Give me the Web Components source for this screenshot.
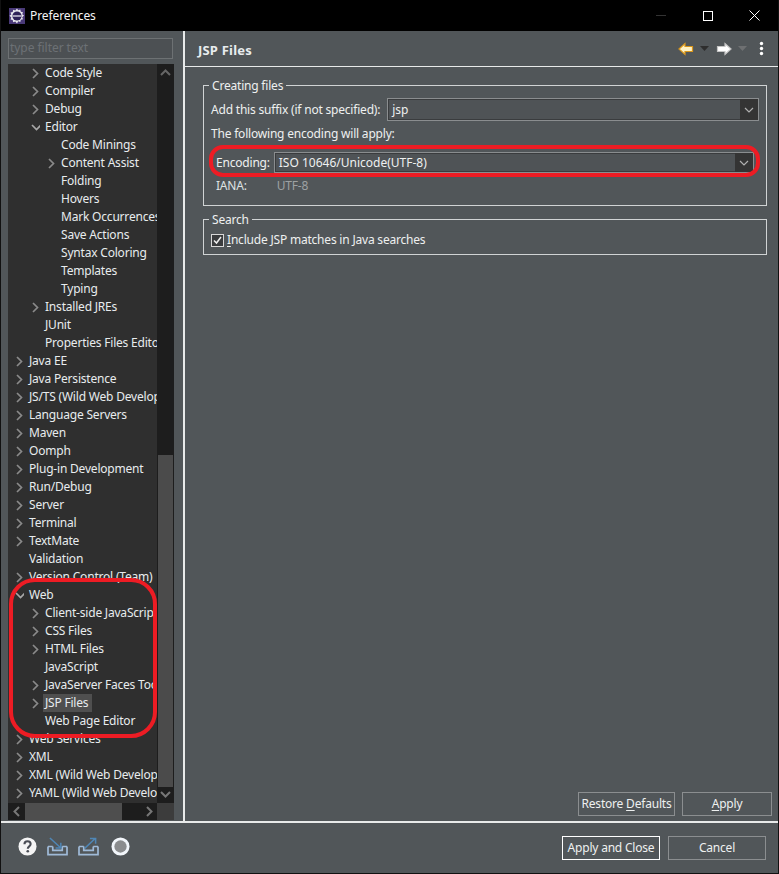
<!DOCTYPE html>
<html lang="en"><head><meta charset="utf-8"><title>Preferences</title>
<style>
html,body{margin:0;height:100%;background:#515659;overflow:hidden}
body{font:12px/18px "Noto Sans","Liberation Sans",sans-serif;letter-spacing:-.2px;color:#eef0f0}
</style></head><body>
<pref-window>
  <pref-titlebar slot="title">Preferences</pref-titlebar>
  <pref-sidebar slot="side">
    <pref-tree>
      <tree-row level="2" arrow="right">Code Style</tree-row>
      <tree-row level="2" arrow="right">Compiler</tree-row>
      <tree-row level="2" arrow="right">Debug</tree-row>
      <tree-row level="2" arrow="down">Editor</tree-row>
      <tree-row level="3">Code Minings</tree-row>
      <tree-row level="3" arrow="right">Content Assist</tree-row>
      <tree-row level="3">Folding</tree-row>
      <tree-row level="3">Hovers</tree-row>
      <tree-row level="3">Mark Occurrences</tree-row>
      <tree-row level="3">Save Actions</tree-row>
      <tree-row level="3">Syntax Coloring</tree-row>
      <tree-row level="3">Templates</tree-row>
      <tree-row level="3">Typing</tree-row>
      <tree-row level="2" arrow="right">Installed JREs</tree-row>
      <tree-row level="2">JUnit</tree-row>
      <tree-row level="2">Properties Files Editor</tree-row>
      <tree-row level="1" arrow="right">Java EE</tree-row>
      <tree-row level="1" arrow="right">Java Persistence</tree-row>
      <tree-row level="1" arrow="right">JS/TS (Wild Web Developer)</tree-row>
      <tree-row level="1" arrow="right">Language Servers</tree-row>
      <tree-row level="1" arrow="right">Maven</tree-row>
      <tree-row level="1" arrow="right">Oomph</tree-row>
      <tree-row level="1" arrow="right">Plug-in Development</tree-row>
      <tree-row level="1" arrow="right">Run/Debug</tree-row>
      <tree-row level="1" arrow="right">Server</tree-row>
      <tree-row level="1" arrow="right">Terminal</tree-row>
      <tree-row level="1" arrow="right">TextMate</tree-row>
      <tree-row level="1">Validation</tree-row>
      <tree-row level="1" arrow="right">Version Control (Team)</tree-row>
      <tree-row level="1" arrow="down">Web</tree-row>
      <tree-row level="2" arrow="right">Client-side JavaScript</tree-row>
      <tree-row level="2" arrow="right">CSS Files</tree-row>
      <tree-row level="2" arrow="right">HTML Files</tree-row>
      <tree-row level="2">JavaScript</tree-row>
      <tree-row level="2" arrow="right">JavaServer Faces Tools</tree-row>
      <tree-row level="2" arrow="right" selected>JSP Files</tree-row>
      <tree-row level="2">Web Page Editor</tree-row>
      <tree-row level="1" arrow="right">Web Services</tree-row>
      <tree-row level="1" arrow="right">XML</tree-row>
      <tree-row level="1" arrow="right">XML (Wild Web Developer)</tree-row>
      <tree-row level="1" arrow="right">YAML (Wild Web Developer)</tree-row>
    </pref-tree>
  </pref-sidebar>
  <pref-page slot="main" heading="JSP Files"></pref-page>
  <pref-footer slot="foot"></pref-footer>
</pref-window>
<script>
function def(name, css, html, init){
  customElements.define(name, class extends HTMLElement{
    constructor(){super();this.attachShadow({mode:'open'}).innerHTML='<style>'+css+'</style>'+(typeof html==='function'?html(this):html);}
    connectedCallback(){ if(init) init(this); }
  });
}
def('pref-window',`
:host{display:grid;grid-template-columns:184px 1fr;grid-template-rows:31px 1fr 52px;height:874px;box-sizing:border-box;border:solid #111;border-width:0 1px 1px 1px}
.t{grid-column:1/3;display:block}
.f{grid-column:1/3;display:block;border-top:2px solid #e8eaea;box-sizing:border-box}
.s{display:block;min-height:0;border-right:2px solid #e8eaea;box-sizing:content-box}
.m{display:block;min-height:0}
`,`<div class="t"><slot name="title"></slot></div><div class="s"><slot name="side"></slot></div><div class="m"><slot name="main"></slot></div><div class="f"><slot name="foot"></slot></div>`);

def('pref-titlebar',`
:host{display:flex;align-items:center;height:31px;background:#000;color:#f4f4f4;padding-left:8px;box-sizing:border-box;letter-spacing:-.1px}
svg{display:block}
.ic{margin-right:5px}
.g{flex:1;font-size:12px}
.b{width:46px;height:31px;display:flex;align-items:center;justify-content:center}
`,`<svg class="ic" width="16" height="16" viewBox="0 0 16 16"><rect width="16" height="16" fill="#4a3a78"/><path d="M8 .5l1.200 1.800 2.100-.8.500 2.200 2.200.5-.8 2.100 1.800 1.200-1.800 1.700.8 2.100-2.200.5-.5 2.200-2.100-.8L8 15.500l-1.700-2-2.100.8-.5-2.200-2.200-.5.8-2.100-1.800-1.700 1.800-1.200-.8-2.100 2.200-.5.500-2.200 2.100.8z" fill="#e9e9ee"/><circle cx="8" cy="8" r="4.600" fill="#2e2358"/><path d="M3.600 7.300h8.800v1.400H3.600z" fill="#d8d6e4"/></svg>
<div class="g"><slot></slot></div>
<div class="b" style="margin-right:1px"><svg width="10" height="2"><rect y="0" width="10" height="1" fill="#333"/></svg></div>
<div class="b"><svg width="10" height="10"><rect x=".5" y=".5" width="9" height="9" fill="none" stroke="#fff"/></svg></div>
<div class="b" style="width:47px"><svg width="11" height="11" viewBox="0 0 11 11"><path d="M.5.5l10 10M10.500.5l-10 10" stroke="#fff" fill="none"/></svg></div>`);

def('pref-sidebar',`
:host{display:flex;flex-direction:column;height:100%;box-sizing:border-box;padding:7px 10px 0 7px;gap:5px}
.filter{height:21px;box-sizing:border-box;border:1px solid #6d7173;background:#4c5053;color:#6c7175;padding:0 1px;line-height:17px;font-size:12px;letter-spacing:-.05px;flex:none}
`,`<div class="filter">type filter text</div><slot></slot>`);

def('pref-tree',`
:host{display:grid;grid-template-columns:149px 17px;grid-template-rows:739px 17px;flex:none;background:#2f2f2f}
.rows{overflow:hidden;min-width:0}
.v{background:#1d1d1d;display:flex;flex-direction:column;align-items:center;position:relative}
.v .thumb{width:15px;background:#4b4b4b;margin-top:auto;height:332px;margin-bottom:16px}
.h{background:#1d1d1d;display:flex;align-items:center;padding:0 0 0 5px;box-sizing:border-box}
.h .thumb{width:97px;height:17px;background:#4e4e4e;margin-left:5px}
.h svg:last-child{margin-left:auto;margin-right:4px}
.corner{background:#3c3c3c}
.up,.dn{position:absolute;left:3px}
.up{top:5px}.dn{bottom:5px}
`,`<div class="rows"><slot></slot></div>
<div class="v"><svg class="up" width="11" height="7"><path d="M1 6l4.500-4.500L10 6" fill="none" stroke="#666" stroke-width="2"/></svg><div class="thumb"></div><svg class="dn" width="11" height="7"><path d="M1 1l4.500 4.500L10 1" fill="none" stroke="#777" stroke-width="2"/></svg></div>
<div class="h"><svg width="7" height="11"><path d="M6 1L1.500 5.500 6 10" fill="none" stroke="#777" stroke-width="2"/></svg><div class="thumb"></div><svg width="7" height="11"><path d="M1 1l4.500 4.500L1 10" fill="none" stroke="#777" stroke-width="2"/></svg></div>
<div class="corner"></div>`);

def('tree-row',`
:host{display:flex;align-items:center;height:18px;white-space:nowrap;color:#e8ecee;font-size:12px}
.a{width:9px;height:18px;flex:none;display:flex;align-items:center;justify-content:center;margin-right:3px}
.l{padding:0 2px;height:18px;line-height:18px}
:host([selected]) .l{background:#4f4f4f;padding-right:4px}
`,(el)=>{
  const lv=+el.getAttribute('level')||1, a=el.getAttribute('arrow');
  const pad=7+(lv-1)*16;
  let ic='';
  if(a==='right') ic='<svg width="7" height="11"><path d="M1 1l4.500 4.500L1 10" fill="none" stroke="#8a8a8a" stroke-width="1.700"/></svg>';
  if(a==='down') ic='<svg width="11" height="7"><path d="M1 1l4.500 4.500L10 1" fill="none" stroke="#a8a8a8" stroke-width="1.700"/></svg>';
  return `<div style="width:${pad}px;flex:none"></div><div class="a">${ic}</div><div class="l"><slot></slot></div>`;
});

def('pref-combo',`
:host{display:flex;height:23px;flex:1;box-sizing:border-box;border:1px solid #8a8d8f;background:#4f5356;min-width:0;letter-spacing:0}
.v{flex:1;padding-left:3px;line-height:19px;color:#eef0f0;border:solid #3a3c3e;border-width:1px 0 1px 1px}
.b{width:18px;background:#343434;display:flex;align-items:center;justify-content:center}
`,`<div class="v"><slot></slot></div><div class="b"><svg width="10" height="6"><path d="M1 1l4 4 4-4" fill="none" stroke="#b0b0b0" stroke-width="1.200"/></svg></div>`);

def('pref-group',`
:host{display:block;position:relative;border:1px solid #d0d3d4;box-sizing:border-box;padding:10px 7px 0 7px}
.cap{position:absolute;top:-9px;left:5px;background:#515659;padding:0 3px;line-height:18px}
`,(el)=>`<div class="cap">${el.getAttribute('label')}</div><slot></slot>`);

def('pref-btn',`
:host{display:flex;align-items:center;justify-content:center;box-sizing:border-box;border:1px solid #8b8e90;color:#eef0f0;white-space:nowrap;font-size:12px}
:host([def]){border-color:#fff}
`,`<slot></slot>`);

def('pref-page',`
:host{display:flex;flex-direction:column;height:100%;position:relative}
.head{display:flex;align-items:center;height:36px;flex:none;box-sizing:border-box;border-bottom:1px solid #e8eaea;padding:0 14px 0 13px}
h1{margin:0;font-size:13px;font-weight:700;flex:1;color:#e8ecee;letter-spacing:.2px;position:relative;top:1px}
.tools{display:flex;align-items:center;gap:5px}
.body{flex:1;display:flex;flex-direction:column;padding:18px 11px 0 18px;min-height:0}
.g1{height:121px}
.g2{height:36px;margin-top:13px;padding-top:10px}
.line{display:flex;align-items:center;height:18px}
.row1{height:23px;display:flex;align-items:center;gap:3px;margin-top:1px}
.row3{height:21px;display:flex;align-items:center;padding-left:5px;padding-right:5px;gap:4px}
.enc{position:absolute;left:24px;top:114px;width:551px;height:32px;box-sizing:border-box;border:4px solid #ed1c24;border-radius:14px}
.iana{display:flex;padding-left:5px;margin-top:4px;height:18px;line-height:18px;color:#dfe2e3}
.iana span+span{margin-left:30px;color:#9da1a3}
.check{display:flex;align-items:center;margin-top:1px;height:18px}
.box{width:11px;height:11px;border:1px solid #d8d8d8;background:#3a3c3e;margin-right:3px;flex:none;box-sizing:content-box}
.box svg{display:block}
.acts{display:flex;justify-content:flex-end;gap:7px;margin-top:auto;padding-bottom:5px;margin-right:-5px}
.acts pref-btn{height:24px}
`,(el)=>`<div class="head"><h1>${el.getAttribute('heading')}</h1><div class="tools">
<svg width="16" height="14" viewBox="0 0 16 14"><path d="M1 7l6-5.500V4.500h7.500v5H7V12.500z" fill="#fff2c4" stroke="#d8961c" stroke-width="1.200"/></svg>
<svg width="9" height="5" style="margin:0 2px 0 1px"><path d="M0 0h9L4.500 5z" fill="#2e2e2e"/></svg>
<svg width="16" height="14" viewBox="0 0 16 14"><path d="M15 7L9 1.500V4.500H1.500v5H9V12.500z" fill="#fff" stroke="#c4c4c4" stroke-width="1.200"/></svg>
<svg width="9" height="5" style="margin:0 7px 0 1px"><path d="M0 0h9L4.500 5z" fill="#6e7072"/></svg>
<svg width="5" height="15"><circle cx="2.500" cy="2.500" r="1.700" fill="#fff"/><circle cx="2.500" cy="7.500" r="1.700" fill="#fff"/><circle cx="2.500" cy="12.500" r="1.700" fill="#fff"/></svg>
</div></div>
<div class="body">
<pref-group class="g1" label="Creating files">
  <div class="row1" style="margin-top:2px"><span>Add this suffix (if not specified):</span><pref-combo style="margin-left:4px">jsp</pref-combo></div>
  <div class="line" style="margin-top:4px">The following encoding will apply:</div>
  <div class="row3" style="margin-top:9px"><span>Encoding:</span><pref-combo style="height:21px"><span style="position:relative;top:-1px">ISO 10646/Unicode(UTF-8)</span></pref-combo></div>
  <div class="iana"><span>IANA:</span><span>UTF-8</span></div>
</pref-group>
<pref-group class="g2" label="Search">
  <div class="check"><div class="box"><svg width="11" height="11"><path d="M2 5.500l2.500 2.500L9 2" fill="none" stroke="#eee" stroke-width="1.500"/></svg></div><span><u style="text-underline-offset:2px">I</u>nclude JSP matches in Java searches</span></div>
</pref-group>
<div class="acts"><pref-btn style="width:97px"><span>Restore <u style="text-underline-offset:2px">D</u>efaults</span></pref-btn><pref-btn style="width:90px"><span><u style="text-underline-offset:2px">A</u>pply</span></pref-btn></div>
</div>
<div class="enc"></div>`);

def('pref-footer',`
:host{display:flex;align-items:center;height:50px;padding:0 12px 0 17px;box-sizing:border-box}
.ic{display:flex;gap:10px;align-items:center;flex:1;padding-bottom:4px}
svg{display:block}
.btns{display:flex;gap:8px}
pref-btn{width:98px;height:24px}
`,`<div class="ic">
<svg width="19" height="19" viewBox="0 0 20 20"><circle cx="10" cy="10" r="9.500" fill="#f4f4f4"/><path d="M6.800 7.500C6.800 5.500 8.200 4.500 10 4.500s3.300 1 3.300 2.900c0 2.500-3 2.400-3 5" fill="none" stroke="#4a4d55" stroke-width="2.200"/><circle cx="10.300" cy="15" r="1.400" fill="#4a4d55"/></svg>
<svg width="21" height="19" viewBox="0 0 22 20"><path d="M1 10v8.500h20V10M1 10h5M16 10h5M6 10v4h10v-4" fill="none" stroke="#9fbad8" stroke-width="1.800"/><path d="M3 1l11 10M14.500 6v5.500H9" fill="none" stroke="#4f86b5" stroke-width="1.600"/></svg>
<svg width="21" height="19" viewBox="0 0 22 20"><path d="M1 10v8.500h20V10M1 10h5M16 10h5M6 10v4h10v-4" fill="none" stroke="#9fbad8" stroke-width="1.800"/><path d="M7 12L18 1.500M12.500 1.500H18.500V7" fill="none" stroke="#4f86b5" stroke-width="1.600"/></svg>
<svg width="19" height="19" viewBox="0 0 20 20" style="margin-left:2px"><circle cx="10" cy="10" r="9.500" fill="#f2f6fb"/><circle cx="10" cy="10" r="6.500" fill="#8a8c8e"/></svg>
</div><div class="btns"><pref-btn def>Apply and Close</pref-btn><pref-btn>Cancel</pref-btn></div>`);

/* red highlight over the tree */
customElements.define('tree-mark',class extends HTMLElement{constructor(){super();this.attachShadow({mode:'open'}).innerHTML='<style>:host{position:absolute;left:9px;top:578px;width:148px;height:160px;box-sizing:border-box;border:4px solid #ed1c24;border-radius:26px;pointer-events:none}</style>';}});
document.body.appendChild(document.createElement('tree-mark'));
</script>
</body></html>
